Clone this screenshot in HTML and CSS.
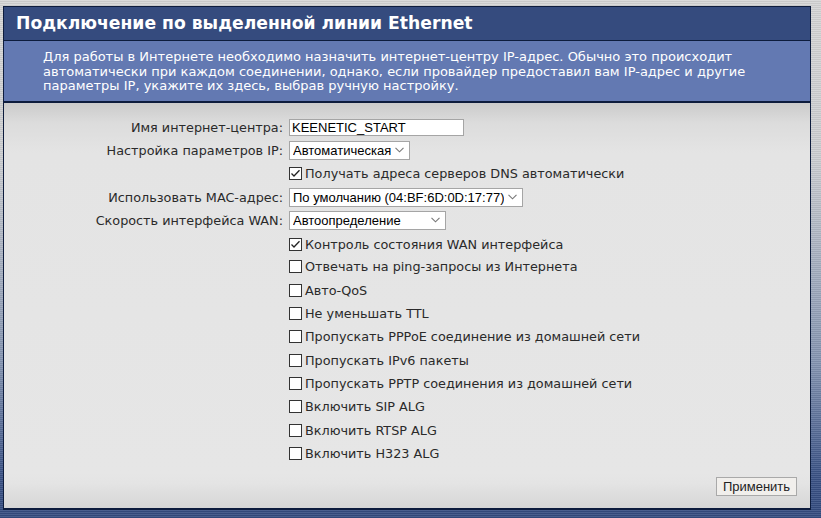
FILE: index.html
```html
<!DOCTYPE html>
<html lang="ru">
<head>
<meta charset="utf-8">
<title>Подключение по выделенной линии Ethernet</title>
<link rel="stylesheet" href="styles.css">
</head>
<body>
<div class="panel">
  <div class="panel-head">Подключение по выделенной линии Ethernet</div>
  <div class="panel-desc">Для работы в Интернете необходимо назначить интернет-центру IP-адрес. Обычно это происходит автоматически при каждом соединении, однако, если провайдер предоставил вам IP-адрес и другие параметры IP, укажите их здесь, выбрав ручную настройку.</div>
  <div class="panel-body">
    <div class="form">
      <label class="lbl">Имя интернет-центра:</label>
      <div class="ctl"><input class="text" type="text" value="KEENETIC_START"></div>

      <label class="lbl">Настройка параметров IP:</label>
      <div class="ctl"><select class="sel sel-ip"><option>Автоматическая</option></select></div>

      <div></div>
      <label class="ctl chk"><input type="checkbox" checked><span>Получать адреса серверов DNS автоматически</span></label>

      <label class="lbl">Использовать MAC-адрес:</label>
      <div class="ctl"><select class="sel sel-mac"><option>По умолчанию (04:BF:6D:0D:17:77)</option></select></div>

      <label class="lbl">Скорость интерфейса WAN:</label>
      <div class="ctl"><select class="sel sel-wan"><option>Автоопределение</option></select></div>

      <div></div>
      <label class="ctl chk gap"><input type="checkbox" checked><span>Контроль состояния WAN интерфейса</span></label>
      <div></div>
      <label class="ctl chk"><input type="checkbox"><span>Отвечать на ping-запросы из Интернета</span></label>
      <div></div>
      <label class="ctl chk"><input type="checkbox"><span>Авто-QoS</span></label>
      <div></div>
      <label class="ctl chk"><input type="checkbox"><span>Не уменьшать TTL</span></label>
      <div></div>
      <label class="ctl chk"><input type="checkbox"><span>Пропускать PPPoE соединение из домашней сети</span></label>
      <div></div>
      <label class="ctl chk"><input type="checkbox"><span>Пропускать IPv6 пакеты</span></label>
      <div></div>
      <label class="ctl chk"><input type="checkbox"><span>Пропускать PPTP соединения из домашней сети</span></label>
      <div></div>
      <label class="ctl chk"><input type="checkbox"><span>Включить SIP ALG</span></label>
      <div></div>
      <label class="ctl chk"><input type="checkbox"><span>Включить RTSP ALG</span></label>
      <div></div>
      <label class="ctl chk"><input type="checkbox"><span>Включить H323 ALG</span></label>
    </div>
    <div class="actions"><button class="btn" type="button">Применить</button></div>
  </div>
</div>
</body>
</html>
```
FILE: styles.css
```css
html, body {
  margin: 0;
  padding: 0;
}
body {
  width: 821px;
  height: 518px;
  overflow: hidden;
  font-family: "DejaVu Sans", Verdana, sans-serif;
  background:
    repeating-linear-gradient(to bottom, rgba(255,255,255,0.10) 0, rgba(255,255,255,0.10) 1px, rgba(0,0,0,0.06) 1px, rgba(0,0,0,0.06) 2px),
    linear-gradient(to bottom, #d6d6d6 0%, #cdcfd2 30%, #8595b2 70%, #3a5286 92%, #344c80 100%);
  padding-top: 6px;
  padding-left: 3px;
  box-sizing: border-box;
}
.panel {
  width: 808px;
  height: 504px;
  box-sizing: border-box;
  border: 1px solid #0d1c3d;
  border-bottom-width: 2px;
  display: flex;
  flex-direction: column;
}
.panel-head {
  height: 33px;
  background: #354b7e;
  color: #fff;
  font-weight: bold;
  font-size: 17.2px;
  line-height: 33px;
  padding-left: 12px;
  border-bottom: 1px solid #0d1c3d;
}
.panel-desc {
  background: #6379b2;
  color: #fff;
  font-size: 13px;
  line-height: 14.5px;
  padding: 9px 40px 7px 39px;
  border-bottom: 2px solid #0d1c3d;
}
.panel-body {
  flex: 1;
  display: flex;
  flex-direction: column;
  background: linear-gradient(to bottom, #cbcbcb 0, #dcdcdc 20px, #e4e4e4 50px, #e6e6e6 370px, #e4e4e4 380px, #d6d6d6 100%);
  padding-top: 13px;
}
.form {
  display: grid;
  grid-template-columns: 279px 1fr;
  column-gap: 6px;
  grid-auto-rows: 23.3px;
  font-size: 12.8px;
  color: #222;
}
.lbl {
  text-align: right;
  align-self: center;
  color: #2a2a2a;
}
.ctl {
  display: flex;
  align-items: center;
}
.chk.gap {
  margin-top: 2px;
}
.text {
  width: 175px;
  height: 17px;
  box-sizing: border-box;
  border: 1px solid #a5a5a5;
  background: #fff;
  font-family: "Liberation Sans", Arial, sans-serif;
  font-size: 13px;
  padding: 0 2px;
  color: #000;
  margin: 0;
}
.sel {
  appearance: none;
  -webkit-appearance: none;
  height: 19px;
  box-sizing: border-box;
  border: 1px solid #a5a5a5;
  border-radius: 0;
  background-color: #fff;
  background-image: url("data:image/svg+xml;utf8,<svg xmlns='http://www.w3.org/2000/svg' width='9' height='6' viewBox='0 0 9 6'><path d='M0.5 0.8 L4.5 4.8 L8.5 0.8' fill='none' stroke='%23777' stroke-width='1.1'/></svg>");
  background-repeat: no-repeat;
  background-position: right 5px center;
  font-family: "Liberation Sans", Arial, sans-serif;
  font-size: 13px;
  color: #000;
  padding: 0 18px 0 3px;
  margin: 0;
}
.sel-ip { width: 121px; }
.sel-mac { width: 234px; }
.sel-wan { width: 157px; }
.chk input {
  appearance: none;
  -webkit-appearance: none;
  width: 13px;
  height: 13px;
  margin: 0 3px 0 0;
  box-sizing: border-box;
  border: 1px solid #333;
  background: #fff;
  flex: none;
}
.chk input:checked {
  background-image: url("data:image/svg+xml;utf8,<svg xmlns='http://www.w3.org/2000/svg' width='11' height='11' viewBox='0 0 11 11'><path d='M1.5 5.5 L4 8 L9.5 2.2' fill='none' stroke='%23222' stroke-width='1.3'/></svg>");
  background-repeat: no-repeat;
  background-position: center;
}
.chk span {
  color: #2a2a2a;
}
.actions {
  display: flex;
  justify-content: flex-end;
  padding-right: 13px;
  margin-top: 12px;
}
.btn {
  width: 81px;
  height: 19px;
  box-sizing: border-box;
  border: 1px solid #a9a9a9;
  background: #f1efec;
  font-family: "Liberation Sans", Arial, sans-serif;
  font-size: 13px;
  color: #222;
  padding: 0;
  margin: 0;
}
```
